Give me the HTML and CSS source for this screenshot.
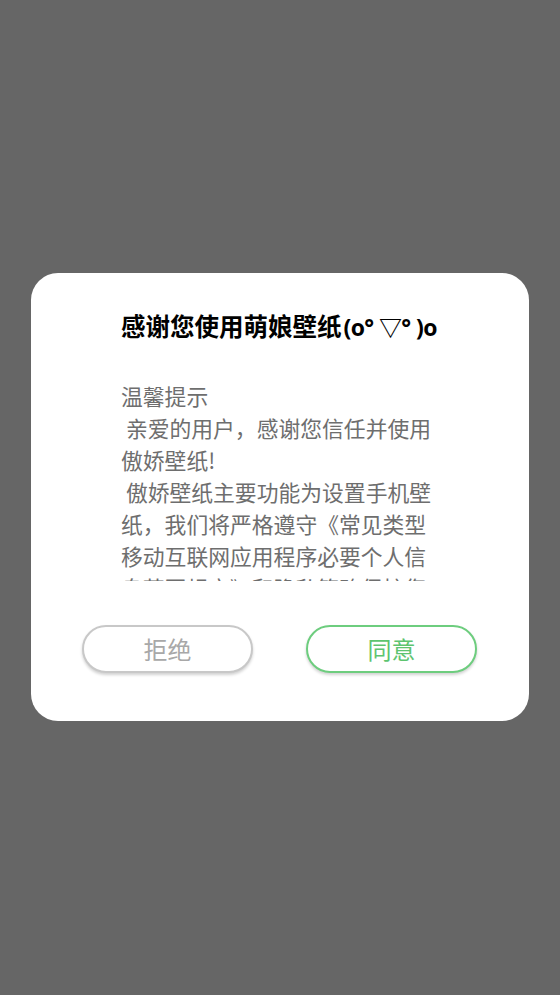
FILE: index.html
```html
<!DOCTYPE html>
<html lang="zh-CN">
<head>
<meta charset="utf-8">
<title>Dialog</title>
<link rel="stylesheet" href="styles.css">
</head>
<body>
<div class="screen">
  <div class="dialog">
    <h1 class="title">感谢您使用萌娘壁纸<span class="kao">(o° ▽° )o</span></h1>
    <div class="body">
      <p>温馨提示<br>&nbsp;亲爱的用户，感谢您信任并使用傲娇壁纸!<br>&nbsp;傲娇壁纸主要功能为设置手机壁纸，我们将严格遵守《常见类型移动互联网应用程序必要个人信息范围规定》和隐私策略保护您的个人信息安全。</p>
    </div>
    <div class="actions">
      <button class="btn btn-refuse">拒绝</button>
      <button class="btn btn-agree">同意</button>
    </div>
  </div>
</div>
</body>
</html>
```
FILE: styles.css
```css
html, body {
  margin: 0;
  padding: 0;
  background: #666666;
}
.screen {
  width: 560px;
  height: 995px;
  background: #666666;
  padding-top: 273px;
  box-sizing: border-box;
  font-family: "Noto Sans CJK SC", "Noto Sans", sans-serif;
}
.dialog {
  margin: 0 31px;
  height: 448px;
  background: #ffffff;
  border-radius: 27px;
  box-sizing: border-box;
  padding-top: 36px;
  display: flex;
  flex-direction: column;
}
.title {
  margin: 0 0 0 90px;
  font-size: 24.5px;
  line-height: 34px;
  font-weight: 700;
  color: #000000;
  white-space: nowrap;
}
.kao {
  font-family: "Open Sans", "Noto Sans CJK SC", sans-serif;
  font-size: 23px;
  letter-spacing: -0.6px;
  margin-left: 2px;
}
.body {
  margin: 36px 0 0 90px;
  width: 318px;
  height: 201px;
  overflow: hidden;
}
.body p {
  margin: 0;
  font-size: 21.8px;
  line-height: 32px;
  color: #6e6e6e;
}
.actions {
  margin-top: 44px;
  padding: 0 52px 0 51px;
  display: flex;
  justify-content: space-between;
}
.btn {
  width: 171px;
  height: 48px;
  border-radius: 24px;
  background: #ffffff;
  font-family: "Noto Sans CJK SC", "Noto Sans", sans-serif;
  font-size: 24px;
  line-height: 1;
  padding: 0;
  box-sizing: border-box;
  box-shadow: 0 2px 3px rgba(0, 0, 0, 0.18);
}
.btn-refuse {
  border: 2px solid #c8c8c8;
  color: #a8a8a8;
}
.btn-agree {
  border: 2px solid #6dcd7e;
  color: #5dc46f;
}
```
